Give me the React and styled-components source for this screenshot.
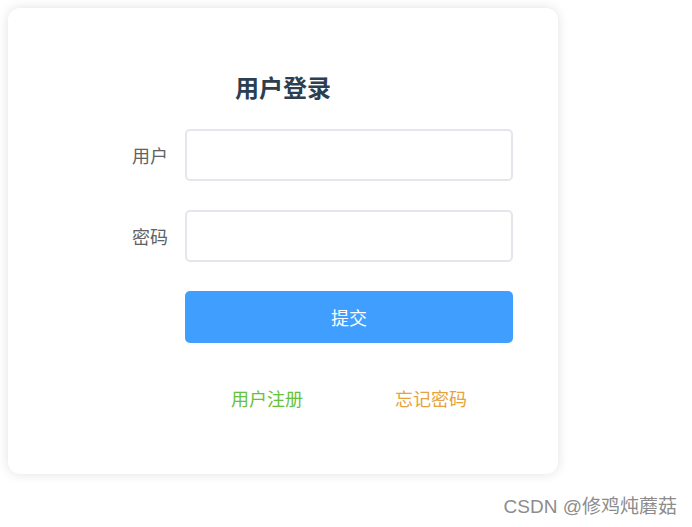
import React from "react";
import styled, { createGlobalStyle } from "styled-components";

const GlobalStyle = createGlobalStyle`
  html, body {
    margin: 0;
    padding: 0;
    background: #ffffff;
    font-family: "Noto Sans CJK SC", "Liberation Sans", sans-serif;
  }
  * {
    box-sizing: border-box;
  }
`;

const Page = styled.div`
  position: relative;
  width: 692px;
  height: 527px;
  padding: 8px;
  overflow: hidden;
`;

const Card = styled.div`
  width: 550px;
  height: 466px;
  background: #ffffff;
  border-radius: 12px;
  box-shadow: 0 0 12px rgba(0, 0, 0, 0.12);
  padding-top: 63px;
  display: flex;
  flex-direction: column;
  align-items: stretch;
`;

const Title = styled.h2`
  margin: 0 0 26px;
  font-size: 24px;
  line-height: 32px;
  font-weight: 700;
  color: #2c3e50;
  text-align: center;
`;

const Form = styled.form`
  display: grid;
  grid-template-columns: 160px 328px;
  grid-auto-rows: 52px;
  column-gap: 17px;
  row-gap: 29px;
  align-items: center;
`;

const Label = styled.label`
  font-size: 18px;
  line-height: 24px;
  color: #606266;
  text-align: right;
`;

const Input = styled.input`
  width: 100%;
  height: 52px;
  border: 2px solid #e4e6eb;
  border-radius: 5px;
  background: #ffffff;
  padding: 0 14px;
  font-size: 16px;
  outline: none;
`;

const SubmitButton = styled.button`
  grid-column: 2;
  height: 52px;
  border: none;
  border-radius: 5px;
  background: #409eff;
  color: #ffffff;
  font-family: inherit;
  font-size: 18px;
  cursor: pointer;
`;

const Links = styled.div`
  grid-column: 2;
  display: flex;
  margin-top: 0;
`;

const LinkText = styled.a`
  flex: 1;
  text-align: center;
  font-size: 18px;
  line-height: 24px;
  color: ${(p) => p.color};
  text-decoration: none;
  cursor: pointer;
`;

const Watermark = styled.div`
  position: absolute;
  right: 15px;
  bottom: 8px;
  font-family: "Liberation Sans", "Noto Sans CJK SC", sans-serif;
  font-size: 19px;
  line-height: 24px;
  color: #8c8c8c;
  text-shadow: 0 0 1px rgba(255, 255, 255, 0.8);
`;

const App = () => {
  return (
    <React.Fragment>
      <GlobalStyle />
      <Page>
        <Card>
          <Title>用户登录</Title>
          <Form onSubmit={(e) => e.preventDefault()}>
            <Label>用户</Label>
            <Input type="text" />
            <Label>密码</Label>
            <Input type="password" />
            <SubmitButton type="submit">提交</SubmitButton>
            <Links>
              <LinkText color="#67c23a">用户注册</LinkText>
              <LinkText color="#e6a23c">忘记密码</LinkText>
            </Links>
          </Form>
        </Card>
        <Watermark>CSDN @修鸡炖蘑菇</Watermark>
      </Page>
    </React.Fragment>
  );
};

export default App;
